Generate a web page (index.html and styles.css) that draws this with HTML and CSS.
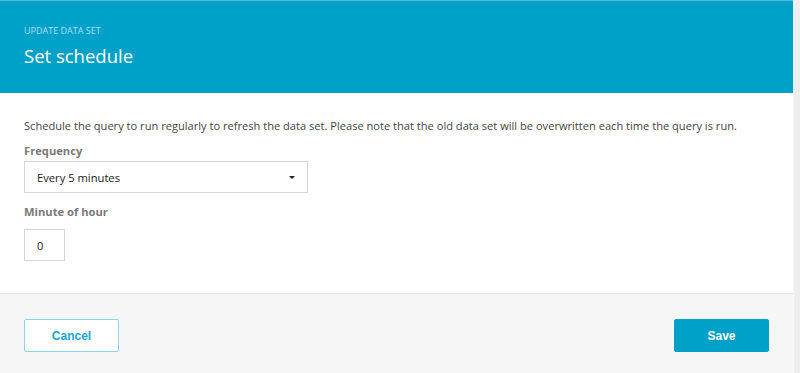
FILE: index.html
```html
<!DOCTYPE html>
<html lang="en">
<head>
	<meta charset="UTF-8">
	<meta name="viewport" content="width=device-width, initial-scale=1.0">
	<title>Set schedule</title>
	<link rel="stylesheet" href="styles.css">
</head>
<body>
	<div class="modal">
		<div class="modal-header">
			<div class="eyebrow">UPDATE DATA SET</div>
			<h1 class="title">Set schedule</h1>
		</div>
		<div class="modal-body">
			<p class="desc">Schedule the query to run regularly to refresh the data set. Please note that the old data set will be overwritten each time the query is run.</p>
			<div class="field">
				<label class="label">Frequency</label>
				<div class="select">
					<span>Every 5 minutes</span>
					<span class="caret"></span>
				</div>
			</div>
			<div class="field">
				<label class="label">Minute of hour</label>
				<div class="input">0</div>
			</div>
		</div>
		<div class="modal-footer">
			<button class="btn btn-cancel">Cancel</button>
			<button class="btn btn-save">Save</button>
		</div>
	</div>
</body>
</html>
```

FILE: styles.css
```css
* {
	margin: 0;
	padding: 0;
	box-sizing: border-box;
}

body {
	background: #eeeeee;
	font-family: "Open Sans", "Noto Sans", sans-serif;
	height: 373px;
	overflow: hidden;
}

.modal {
	width: 794px;
	height: 373px;
	display: flex;
	flex-direction: column;
	background: #fff;
	border-right: 1px solid #f8f8f8;
}

.modal-header {
	height: 93px;
	background: #00a1c9;
	border-top: 1px solid #4dbfdc;
	padding: 23px 24px 0;
}

.eyebrow {
	font-size: 9px;
	color: #a9def0;
	line-height: 14px;
}

.title {
	font-size: 18.5px;
	font-weight: normal;
	color: #fff;
	line-height: 24px;
	margin-top: 6px;
}

.modal-body {
	height: 201px;
	padding: 24px 24px 0;
	border-bottom: 1px solid #e6e6e6;
}

.desc {
	font-size: 11.1px;
	color: #444;
	line-height: 18px;
}

.field {
	margin-top: 7px;
}

.label {
	display: block;
	font-size: 11.2px;
	font-weight: bold;
	color: #7a7a7a;
	line-height: 18px;
}

.select {
	margin-top: 1px;
	width: 284px;
	height: 32px;
	border: 1px solid #d5d5d5;
	display: flex;
	align-items: center;
	justify-content: space-between;
	padding: 0 12px 0 12px;
	font-size: 11.2px;
	color: #222;
}

.caret {
	width: 0;
	height: 0;
	border-left: 3.5px solid transparent;
	border-right: 3.5px solid transparent;
	border-top: 3.5px solid #222;
}

.field + .field {
	margin-top: 10px;
}

.input {
	margin-top: 8px;
	width: 41px;
	height: 32px;
	border: 1px solid #d5d5d5;
	display: flex;
	align-items: center;
	padding-left: 12px;
	font-size: 11.2px;
	color: #222;
}

.modal-footer {
	flex: 1;
	background: #f6f6f6;
	display: flex;
	justify-content: space-between;
	align-items: flex-start;
	padding: 25px 24px 0;
}

.btn {
	width: 95px;
	height: 33px;
	border-radius: 2px;
	font-family: "Liberation Sans", Arial, sans-serif;
	font-weight: bold;
	font-size: 12px;
	cursor: pointer;
}

.btn-cancel {
	background: #fff;
	border: 1px solid #8fd3e8;
	color: #1ba6cc;
}

.btn-save {
	background: #00a1c9;
	border: 1px solid #00a1c9;
	color: #fff;
}
```
